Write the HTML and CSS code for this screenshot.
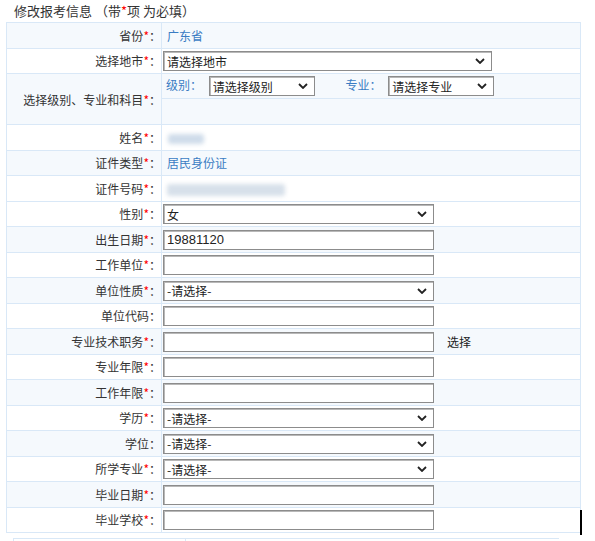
FILE: index.html
```html
<!DOCTYPE html>
<html lang="zh-CN">
<head>
    <meta charset="UTF-8">
    <title>修改报考信息</title>
    <link rel="stylesheet" href="styles.css">
</head>
<body>
  <div class="page">
    <div class="title">修改报考信息 （带<span class="req">*</span>项 为必填）</div>

    <table class="form">
      <tr class="alt">
        <td class="label">省份<span class="req">*</span>：</td>
        <td class="field"><span class="value">广东省</span></td>
      </tr>
      <tr>
        <td class="label">选择地市<span class="req">*</span>：</td>
        <td class="field"><select class="sel sel-wide"><option>请选择地市</option></select></td>
      </tr>
      <tr class="alt tall">
        <td class="label">选择级别、专业和科目<span class="req">*</span>：</td>
        <td class="field nested">
          <table class="inner">
            <tr>
              <td class="pick">
                <span class="pick-label">级别：</span>
                <select class="sel sel-small"><option>请选择级别</option></select>
                <span class="pick-label pick-gap">专业：</span>
                <select class="sel sel-small"><option>请选择专业</option></select>
              </td>
            </tr>
            <tr><td class="pick"></td></tr>
          </table>
        </td>
      </tr>
      <tr>
        <td class="label">姓名<span class="req">*</span>：</td>
        <td class="field"><span class="blur blur-name"></span></td>
      </tr>
      <tr class="alt">
        <td class="label">证件类型<span class="req">*</span>：</td>
        <td class="field"><span class="value">居民身份证</span></td>
      </tr>
      <tr>
        <td class="label">证件号码<span class="req">*</span>：</td>
        <td class="field"><span class="blur blur-id"></span></td>
      </tr>
      <tr>
        <td class="label">性别<span class="req">*</span>：</td>
        <td class="field"><select class="sel"><option>女</option></select></td>
      </tr>
      <tr class="alt">
        <td class="label">出生日期<span class="req">*</span>：</td>
        <td class="field"><input class="txt" type="text" value="19881120"></td>
      </tr>
      <tr>
        <td class="label">工作单位<span class="req">*</span>：</td>
        <td class="field"><input class="txt" type="text"></td>
      </tr>
      <tr class="alt">
        <td class="label">单位性质<span class="req">*</span>：</td>
        <td class="field"><select class="sel"><option>-请选择-</option></select></td>
      </tr>
      <tr>
        <td class="label">单位代码：</td>
        <td class="field"><input class="txt" type="text"></td>
      </tr>
      <tr class="alt">
        <td class="label">专业技术职务<span class="req">*</span>：</td>
        <td class="field"><input class="txt" type="text"><span class="choose">选择</span></td>
      </tr>
      <tr>
        <td class="label">专业年限<span class="req">*</span>：</td>
        <td class="field"><input class="txt" type="text"></td>
      </tr>
      <tr class="alt">
        <td class="label">工作年限<span class="req">*</span>：</td>
        <td class="field"><input class="txt" type="text"></td>
      </tr>
      <tr>
        <td class="label">学历<span class="req">*</span>：</td>
        <td class="field"><select class="sel"><option>-请选择-</option></select></td>
      </tr>
      <tr class="alt">
        <td class="label">学位：</td>
        <td class="field"><select class="sel"><option>-请选择-</option></select></td>
      </tr>
      <tr>
        <td class="label">所学专业<span class="req">*</span>：</td>
        <td class="field"><select class="sel"><option>-请选择-</option></select></td>
      </tr>
      <tr class="alt">
        <td class="label">毕业日期<span class="req">*</span>：</td>
        <td class="field"><input class="txt" type="text"></td>
      </tr>
      <tr>
        <td class="label">毕业学校<span class="req">*</span>：</td>
        <td class="field"><input class="txt" type="text"></td>
      </tr>
    </table>

    <!-- start of the next block, cut off by the screenshot -->
    <div class="next-block"><div class="next-col"></div></div>

    <div class="caret"></div>
  </div>
</body>
</html>
```

FILE: styles.css
```css
body {
    margin: 0;
    background-color: #fff;
    font-family: "Noto Sans CJK SC", "Noto Sans", sans-serif;
    font-size: 12px;
    color: #333;
}

.page {
    position: relative;
    width: 595px;
    height: 541px;
    overflow: hidden;
}

.title {
    height: 22px;
    line-height: 22px;
    padding-left: 14px;
    font-size: 13px;
    color: #333;
}

.req {
    color: #f00;
}

/* main form table */
.form {
    margin-left: 6px;
    width: 575px;
    border-collapse: collapse;
}

.form > tbody > tr > td {
    border: 1px solid #d9e8f7;
    height: 24.5px;
    padding: 0;
}

.form > tbody > tr.alt > td {
    background-color: #f5f9fd;
}

.form > tbody > tr.tall > td {
    height: 50px;
}

.label {
    width: 154px;
    text-align: right;
    padding-right: 0;
    white-space: nowrap;
}

.field {
    padding-left: 1px !important;
}

.value {
    padding-left: 4px;
    color: #3a7cc3;
}

/* nested level / major row */
.nested {
    padding: 0 !important;
    vertical-align: top;
}

.inner {
    width: 100%;
    border-collapse: collapse;
}

.inner td {
    height: 24px;
    padding: 0 0 0 4px;
    border-bottom: 1px solid #d9e8f7;
}

.inner tr:last-child td {
    border-bottom: none;
}

.pick-label {
    color: #3a7cc3;
}

.pick-gap {
    margin-left: 28px;
}

/* form controls */
.sel,
.txt {
    box-sizing: border-box;
    height: 20px;
    width: 271px;
    margin: 0;
    padding: 0 3px;
    border: 1px solid #8c8c8c;
    box-shadow: inset 1px 1px 0 #b8b8b8;
    border-radius: 0;
    background-color: #fff;
    font-family: "Noto Sans CJK SC", "Liberation Sans", sans-serif;
    font-size: 12px;
    color: #222;
    vertical-align: middle;
    outline: none;
}

.txt {
    font-family: "Liberation Sans", "Noto Sans CJK SC", sans-serif;
    font-size: 13px;
}

.sel {
    -webkit-appearance: none;
    appearance: none;
    padding-right: 20px;
    background-image: url("data:image/svg+xml,%3Csvg xmlns='http://www.w3.org/2000/svg' width='10' height='6' viewBox='0 0 10 6'%3E%3Cpath d='M1 1l4 4 4-4' fill='none' stroke='%23222' stroke-width='1.8'/%3E%3C/svg%3E");
    background-repeat: no-repeat;
    background-position: right 6px center;
}

.sel-wide {
    width: 329px;
}

.sel-small {
    width: 106px;
    margin-left: 4px;
}

.choose {
    margin-left: 13px;
    font-size: 12px;
    color: #222;
    vertical-align: middle;
}

/* masked personal data */
.blur {
    display: inline-block;
    vertical-align: middle;
    background-color: #cfdcea;
    filter: blur(2px);
    border-radius: 3px;
}

.blur-name {
    width: 36px;
    height: 10px;
    margin-left: 5px;
}

.blur-id {
    width: 118px;
    height: 12px;
    margin-left: 4px;
    background-color: #d7e0ea;
}

.next-block {
    margin: 5px 0 0 13px;
    width: 545px;
    height: 10px;
    border-top: 1px solid #d9e8f7;
    border-left: 1px solid #d9e8f7;
}

.next-col {
    margin-left: 171px;
    height: 10px;
    border-left: 1px solid #d9e8f7;
}

.caret {
    position: absolute;
    left: 580px;
    top: 510px;
    width: 2px;
    height: 25px;
    background-color: #000;
}
```
